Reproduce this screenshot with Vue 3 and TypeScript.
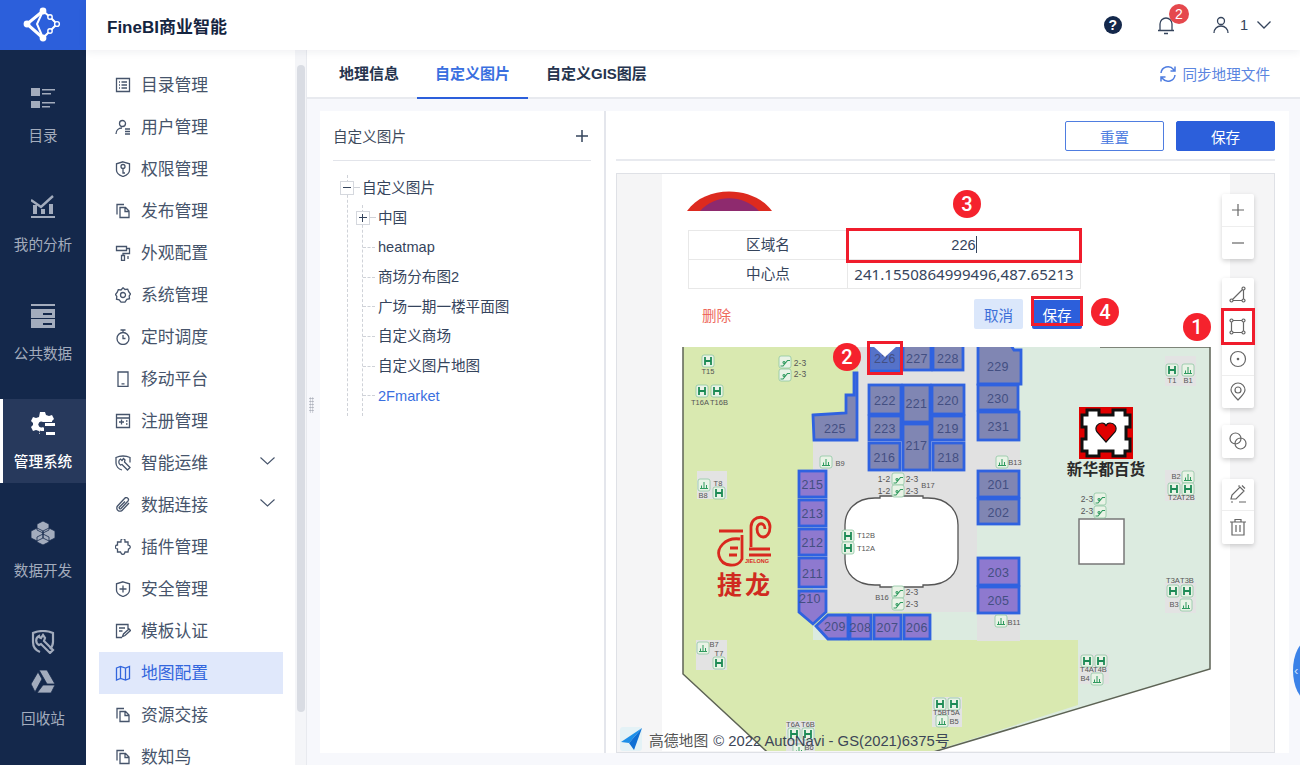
<template>
  <div class="app">
    <aside class="rail">
      <div class="logo">
        <svg width="40" height="40" viewBox="22 5 40 40" fill="none" stroke="#fff">
          <path d="M42 11L26 24L42 38" stroke-width="3" />
          <path d="M42 11L49 17L56 24L49 31L42 38M42 11L36 24L42 38" stroke-width="2" />
          <circle cx="42" cy="11" r="3.4" fill="#fff" stroke="none" />
          <circle cx="26" cy="24" r="3.4" fill="#fff" stroke="none" />
          <circle cx="42" cy="38" r="3.4" fill="#fff" stroke="none" />
          <circle cx="49" cy="17" r="2.2" fill="#2c5fdb" stroke-width="1.4" />
          <circle cx="56" cy="24" r="2.4" fill="#2c5fdb" stroke-width="1.4" />
          <circle cx="49" cy="31" r="2.2" fill="#2c5fdb" stroke-width="1.4" />
        </svg>
      </div>
      <div class="rail-list">
        <div class="rail-item">
          <svg class="rail-icon" viewBox="0 0 24 24" fill="#a3acbd">
            <path d="M0 2h9v8H0zM0 15h9v7H0zM11 3h13v1.600H11zM11 7h9v1.600h-9zM11 16h13v1.600H11zM11 20h8v1.600h-8z" />
          </svg>
          <span>目录</span>
        </div>
        <div class="rail-item">
          <svg class="rail-icon" viewBox="0 0 24 24" fill="#a3acbd">
            <path d="M2 10h4v9H2zM10 14h4v5h-4zM18 9h4v10h-4zM0 21h24v2H0z" />
            <path d="M0 5l10 7L22 1" fill="none" stroke="#a3acbd" stroke-width="2.4" />
          </svg>
          <span>我的分析</span>
        </div>
        <div class="rail-item">
          <svg class="rail-icon" viewBox="0 0 24 24" fill="#a3acbd">
            <path fill-rule="evenodd" d="M0 0h24v2H0zM0 5h24v9H0zM12 9v2h9V9zM0 15h24v9H0zM12 19v2h9v-2z" />
          </svg>
          <span>公共数据</span>
        </div>
        <div class="rail-item active">
          <svg class="rail-icon" viewBox="0 0 24 24" fill="#fff">
            <path fill-rule="evenodd" d="M9 0h5l1 3 3 1 3-1 2 4-2 2v1h-9a3 3 0 1 0 0 5l1 1v3h-3l-1-.500-1 3.500H9l-1-3-3-1-3 1-2-4 2-2v-2L0 9l2-4 3 1 3-1z" />
            <path d="M14 11h10v3H14zM15 20h9v3h-9z" />
          </svg>
          <span>管理系统</span>
        </div>
        <div class="rail-item">
          <svg class="rail-icon" viewBox="0 0 24 24" fill="#a3acbd" stroke="#14284b" stroke-width=".8">
            <path d="M12 0l6 3v6l-6 3-6-3V3zM6 7l6 3v7l-6 3-6-3v-7zM18 7l6 3v7l-6 3-6-3v-7zM12 13l6 3v5l-6 3-6-3v-5z" />
          </svg>
          <span>数据开发</span>
        </div>
        <div class="rail-item short">
          <svg class="rail-icon" viewBox="0 0 24 24" fill="none" stroke="#a3acbd" stroke-width="2.200">
            <path d="M12 1c6 0 10 2 10 2v9c0 3-1 5-3 7M9 22C4 20 2 16 2 12V3s4-2 10-2" />
            <path d="M8 6a5 5 0 0 0 0 9l2-1 9 9 3-3-9-9 1-3-2-3-2 3-2-1z" />
          </svg>
        </div>
        <div class="rail-item">
          <svg class="rail-icon" viewBox="0 0 24 24" fill="#a3acbd" stroke="#14284b" stroke-width=".8">
            <path d="M8 1h8l8 14h-8zM7 3l4 7-7 13-4-8zM12 16h12l-4 8H6z" />
          </svg>
          <span>回收站</span>
        </div>
      </div>
    </aside>

    <div class="main">
      <header class="top">
        <div class="brand">FineBI商业智能</div>
        <div class="top-right">
          <div class="help">?</div>
          <div class="bell">
            <svg width="20" height="20" viewBox="0 0 20 20" fill="none" stroke="#35445c" stroke-width="1.300">
              <path d="M2 15.500h16M4 15.500V9a6 6 0 0 1 12 0v6.500M8 18.500h4" />
            </svg>
            <span class="bell-count">2</span>
          </div>
          <svg class="user" width="18" height="18" viewBox="0 0 18 18" fill="none" stroke="#35445c" stroke-width="1.300">
            <circle cx="9" cy="5" r="3.500" />
            <path d="M2 17c0-4 3-7 7-7s7 3 7 7" />
          </svg>
          <span class="user-name">1</span>
          <svg width="14" height="8" viewBox="0 0 14 8" fill="none" stroke="#35445c" stroke-width="1.300">
            <path d="M.500 .500L7 7l6.500-6.500" />
          </svg>
        </div>
      </header>

      <div class="below">
        <nav class="subnav">
          <ul class="sub-list">
            <li v-for="item in navItems" :key="item.label" class="sub-item" :class="{ current: item.current }">
              <svg width="16" height="16" viewBox="0 0 16 16" fill="none" stroke="currentColor" stroke-width="1.300">
                <path :d="item.icon" />
              </svg>
              <span>{{ item.label }}</span>
              <svg v-if="item.more" class="more" width="15" height="8" viewBox="0 0 15 8" fill="none" stroke="#46546b" stroke-width="1.100">
                <path d="M.500 .500L7.500 7l7-6.500" />
              </svg>
            </li>
          </ul>
          <div class="scroll-track"><div class="scroll-thumb"></div></div>
        </nav>

        <section class="content">
          <div class="tabs">
            <div class="tab">地理信息</div>
            <div class="tab selected">自定义图片</div>
            <div class="tab">自定义GIS图层</div>
            <div class="sync">
              <svg width="18" height="18" viewBox="0 0 18 18" fill="none" stroke="#4f7de0" stroke-width="1.500">
                <path d="M2 8a7 7 0 0 1 12.500-3.500L16 6M16 1.500V6h-4.500M16 10a7 7 0 0 1-12.500 3.500L2 12M2 16.500V12h4.500" />
              </svg>
              <span>同步地理文件</span>
            </div>
          </div>

          <div class="body">
            <div class="grip"></div>
            <div class="tree-panel">
              <div class="tree-head">
                <span>自定义图片</span>
                <svg width="14" height="14" viewBox="0 0 14 14" stroke="#35445c" stroke-width="1.500">
                  <path d="M7 1v12M1 7h12" />
                </svg>
              </div>
              <div class="tree">
                <div class="tree-row root">
                  <i class="node-box minus"></i><i class="dash short-dash"></i><span>自定义图片</span>
                </div>
                <div class="tree-row branch">
                  <i class="node-box plus"></i><i class="dash short-dash"></i><span>中国</span>
                </div>
                <div v-for="leaf in treeLeaves" :key="leaf" class="tree-row leaf" :class="{ on: leaf === '2Fmarket' }">
                  <i class="dash"></i><span>{{ leaf }}</span>
                </div>
              </div>
            </div>

            <div class="map-panel">
              <div class="map-actions">
                <button class="btn-plain">重置</button>
                <button class="btn-save">保存</button>
              </div>
              <div class="map-wrap">
                <svg class="floor" width="658" height="577" viewBox="617 175 658 577">
                  <rect x="662" y="175" width="568" height="577" fill="#fff" />
                  <polygon points="683,348 1210,348 1210,670 900,763 778,763 683,675" fill="#dcebe0" />
                  <polygon points="683,348 858,348 858,442 813,442 813,641 1078,641 1078,706 900,763 778,763 683,675" fill="#d9e9b0" />
                  <polygon points="813,442 858,442 858,348 977,348 977,613 813,613" fill="#e1e1e1" />
                  <rect x="977" y="441" width="43" height="31" fill="#e1e1e1" />
                  <rect x="977" y="613" width="43" height="29" fill="#e1e1e1" />
                  <polygon points="827,613 931,613 931,641 827,641 813,625" fill="#d9e9b0" />
                  <path d="M683 348V675L778 763M1100 348H1210V670L900 763" fill="none" stroke="#5d6355" stroke-width="1.500" />

                  <path d="M875 499H880V497H923V499H928C948 499 958 512 958 526V560C958 574 948 586 928 586H923V588H880V586H875C855 586 845 574 845 560V526C845 512 855 499 875 499Z" fill="#fff" stroke="#555" stroke-width="1.300" />
                  <rect x="1079" y="520" width="45" height="45" fill="#fff" stroke="#777" stroke-width="1.500" />

                  <g v-for="r in rooms" :key="r.id">
                    <polygon v-if="r.points" :points="r.points" :fill="r.fill" stroke="#2f62e0" stroke-width="2.800" />
                    <rect v-else :x="r.x + 1" :y="r.y + 1" :width="r.w - 2" :height="r.h - 2" :fill="r.fill" stroke="#2f62e0" stroke-width="2.800" />
                    <text :x="r.tx" :y="r.ty" class="room-no">{{ r.id }}</text>
                  </g>
                  <polygon points="873,347 897,347 885,358" fill="#fff" />

                  <rect v-for="g in greyBoxes" :key="g.join()" :x="g[0]" :y="g[1]" :width="g[2]" :height="g[3]" fill="#e3e3e3" />
                  <g v-for="m in marks" :key="m.x + '-' + m.y">
                    <rect :x="m.x" :y="m.y" width="12" height="12" rx="2" fill="#e9f3e6" stroke="#8ec6a2" stroke-width=".8" />
                    <path v-if="m.kind === 'lift'" :transform="`translate(${m.x} ${m.y})`" d="M3 2v8M9 2v8M3 6h6" fill="none" stroke="#1c8a55" stroke-width="1.800" />
                    <path v-else-if="m.kind === 'esc'" :transform="`translate(${m.x} ${m.y})`" d="M1.500 10h2.500L8.500 4.500h2.500M5 5.500a1 1 0 1 0 .01 0" fill="none" stroke="#2f9a5f" stroke-width="1.100" />
                    <path v-else :transform="`translate(${m.x} ${m.y})`" d="M2 9.500h8M3.500 9.500V6.500M6 9.500V3M8.500 9.500V6" fill="none" stroke="#2f9a5f" stroke-width="1" />
                  </g>
                  <text v-for="t in mapLabels" :key="t[0] + t[1] + t[2]" :x="t[1]" :y="t[2]" class="map-label" :class="{ level: t[0].includes('-') }">{{ t[0] }}</text>

                  <g fill="none" stroke="#d9281e" stroke-width="2.800">
                    <path d="M719 532H743M740 540C724 538 717 550 719 557C722 568 738 569 742 560V536M730 549H738M729 556H737" />
                    <path d="M751 548V528C751 515 770 515 770 528C770 541 757 541 757 530C757 523 765 523 765 530M749 550H770M749 556H771" />
                  </g>
                  <text x="757" y="564" class="jl-small">JIELONG</text>
                  <text x="745" y="595" class="jl-name">捷龙</text>

                  <rect x="1079" y="408" width="54" height="52" fill="#e00000" />
                  <polygon points="1087,411 1099,411 1099,416 1113,416 1113,411 1125,411 1125,416 1130,416 1130,428 1126,428 1126,440 1130,440 1130,452 1125,452 1125,457 1113,457 1113,452 1099,452 1099,457 1087,457 1087,452 1082,452 1082,440 1086,440 1086,428 1082,428 1082,416 1087,416" fill="#fff" stroke="#111" stroke-width="3" />
                  <path d="M1106 443L1097 433C1094 428 1098 424 1102 424C1104 424 1105.500 425 1106 427C1106.500 425 1108 424 1110 424C1114 424 1118 428 1115 433Z" fill="#e00000" stroke="#111" stroke-width="1.200" />
                  <text x="1106" y="476" class="xhd">新华都百货</text>
                </svg>

                <div class="map-credit">
                  <svg width="24" height="24" viewBox="0 0 24 24">
                    <rect x="0" y="0" width="22" height="24" rx="3" fill="#e4f2f6" />
                    <path d="M22 1L1 15l8 1z" fill="#1c8fe8" />
                    <path d="M22 1L9 16l5 7z" fill="#0f6fd4" />
                  </svg>
                  <span class="credit-name">高德地图</span>
                  <span>© 2022 AutoNavi - GS(2021)6375号</span>
                </div>

                <div class="popup">
                  <svg class="dome" width="85" height="20" viewBox="0 0 85 20">
                    <path d="M0 20C18 -6 66 -6 85 20Z" fill="#dd2a1f" />
                    <path d="M13 20C28 3 56 3 72 20Z" fill="#8e2a6e" />
                  </svg>
                  <table class="info">
                    <tbody>
                      <tr>
                        <th>区域名</th>
                        <td class="value">226<i class="caret"></i></td>
                      </tr>
                      <tr>
                        <th>中心点</th>
                        <td class="value coords">241.1550864999496,487.65213</td>
                      </tr>
                    </tbody>
                  </table>
                  <div class="popup-actions">
                    <span class="remove">删除</span>
                    <button class="btn-soft">取消</button>
                    <button class="btn-small">保存</button>
                  </div>
                </div>

                <div class="tools">
                  <div v-for="(group, i) in toolGroups" :key="i" class="tool-group">
                    <div v-for="tool in group" :key="tool" class="tool">
                      <svg width="20" height="20" viewBox="0 0 20 20" fill="none" stroke="#666" stroke-width="1.200">
                        <path :d="tool" />
                      </svg>
                    </div>
                  </div>
                </div>

                <div class="red-box box-input"></div>
                <div class="red-box box-save"></div>
                <div class="red-box box-room"></div>
                <div class="red-box box-tool"></div>
                <div class="step step-1">1</div>
                <div class="step step-2">2</div>
                <div class="step step-3">3</div>
                <div class="step step-4">4</div>
              </div>
            </div>
          </div>
        </section>
      </div>
    </div>

    <div class="edge-tab">‹</div>
  </div>
</template>

<script setup lang="ts">
interface NavItem {
  label: string;
  icon: string;
  more?: boolean;
  current?: boolean;
}

interface Room {
  id: string;
  x?: number;
  y?: number;
  w?: number;
  h?: number;
  points?: string;
  fill: string;
  tx: number;
  ty: number;
}

const pageIcon = 'M5 4.500h5.500l3.500 3.500v6.500H5zM10 5v3.500h4M2 11.500V1.500h7';

const navItems: NavItem[] = [
  { label: '目录管理', icon: 'M1.500 1.500h13v13h-13zM4 5h1M6.500 5h5.500M4 8h1M6.500 8h5.500M4 11h1M6.500 11h5.500' },
  { label: '用户管理', icon: 'M4.500 4.500a3 3 0 1 0 6 0a3 3 0 1 0-6 0M1 15c0-3.500 2.500-6 6-6M10 10h5M10 12.500h5M10 15h5' },
  { label: '权限管理', icon: 'M8 .800l6.500 2v6.500c0 3-3 5-6.500 6.200C4.500 14.300 1.500 12.300 1.500 9.300V2.800zM6 5.500a2 2 0 1 0 4 0a2 2 0 1 0-4 0M8 7.500v4.500h2' },
  { label: '发布管理', icon: pageIcon },
  { label: '外观配置', icon: 'M1.500 1.500h10v4h-10zM11.500 3.500h3v5H8v2M6.500 10.500h3v5h-3zM13 11v3' },
  { label: '系统管理', icon: 'M8 .800l2 1.700 2.700-.300 1 2.500 1.800 2.300-1.300 2 .300 2.700-2.700.700L10 15.200H6l-1.800-2.300-2.700-.700.300-2.700-1.300-2 1.800-2.300 1-2.500 2.700.300zM5.500 8a2.500 2.500 0 1 0 5 0a2.500 2.500 0 1 0-5 0' },
  { label: '定时调度', icon: 'M2 9.500a6 6 0 1 0 12 0a6 6 0 1 0-12 0M5.500 1h5M8 1v2.500M8 6v3.500h2.500' },
  { label: '移动平台', icon: 'M3 1h10v14.500H3zM6.500 12.800h3' },
  { label: '注册管理', icon: 'M1.500 1.500h13v13h-13zM1.500 5h13M4 9h5M6.500 6.500v5M11 8h1.500M11 11h1.500' },
  { label: '智能运维', more: true, icon: 'M8 1c4 0 7 1.500 7 1.500v5M7 15C3.500 14 1 11 1 8V2.500S4 1 8 1M5.500 4a3.500 3.500 0 0 0 0 6l1.500-.500 5.500 5.500 2.500-2.500-5.500-5.500.500-2-1.500-1.500-1.500 2z' },
  { label: '数据连接', more: true, icon: 'M14 6L7.500 13a3 3 0 0 1-5-4l7-7.500a2 2 0 0 1 3.500 2.500l-7 7.500a1 1 0 0 1-1.500-1.500L10 4.500' },
  { label: '插件管理', icon: 'M6 1.500a2 2 0 0 1 4 0L10 3h3v3l1.500.500a2 2 0 0 1-1 3.500L13 13h-3l-.500 1.500a2 2 0 0 1-3.500-.500L5.500 13H2.500V10L1 9.500a2 2 0 0 1 1.500-3.500V3H6z' },
  { label: '安全管理', icon: 'M8 .800l6.500 2v6.500c0 3-3 5-6.500 6.200C4.500 14.300 1.500 12.300 1.500 9.300V2.800zM4.500 8h7M8 4.500v7' },
  { label: '模板认证', icon: 'M13 6V1.500H1.500v13H7M4 5h6M4 8h3.500M7.500 13.500l1-2.500 5.500-5 1.500 1.500-5.500 5z' },
  { label: '地图配置', current: true, icon: 'M1.500 3l4-1.500 5 1.500 4-1.500v12l-4 1.500-5-1.500-4 1.500zM5.500 1.500v12M10.500 3v12' },
  { label: '资源交接', icon: pageIcon },
  { label: '数知鸟', icon: pageIcon }
];

const treeLeaves = ['heatmap', '商场分布图2', '广场一期一楼平面图', '自定义商场', '自定义图片地图', '2Fmarket'];

const dark = '#8086b3';
const purple = '#8e79cf';

function box(id: string, x: number, y: number, w: number, h: number, fill = dark): Room {
  return { id, x, y, w, h, fill, tx: x + w / 2, ty: y + h / 2 + 5 };
}

const rooms: Room[] = [
  box('226', 868, 345, 34, 28, '#5572c9'),
  box('227', 902, 345, 30, 27),
  box('228', 932, 345, 32, 27),
  { id: '229', points: '978,345 1010,345 1014,351 1021,351 1021,385 978,385', fill: dark, tx: 998, ty: 372 },
  box('230', 977, 385, 42, 27),
  box('231', 977, 412, 43, 30),
  box('222', 868, 385, 34, 31),
  { ...box('221', 902, 385, 29, 39), ty: 409 },
  box('220', 931, 385, 34, 31),
  box('223', 868, 416, 34, 26),
  box('219', 931, 416, 34, 26),
  { ...box('217', 902, 424, 29, 48), ty: 451 },
  box('216', 868, 443, 33, 29),
  box('218', 932, 443, 33, 29),
  { id: '225', points: '813,416 846,414 846,396 854,396 854,374 857,374 857,441 814,441', fill: dark, tx: 835, ty: 434 },
  box('215', 798, 471, 29, 28, purple),
  box('213', 798, 500, 29, 28, purple),
  box('212', 798, 529, 29, 28, purple),
  box('211', 798, 558, 29, 31, purple),
  { id: '210', points: '799,592 826,592 826,613 813,625 799,613', fill: purple, tx: 810, ty: 604 },
  { id: '209', points: '828,616 848,616 848,640 828,640 816,627', fill: purple, tx: 835, ty: 632 },
  box('208', 849, 615, 23, 26, purple),
  box('207', 873, 615, 29, 26, purple),
  box('206', 903, 615, 28, 26, purple),
  box('201', 977, 471, 43, 28),
  box('202', 977, 499, 43, 27),
  box('203', 977, 558, 43, 29, purple),
  box('205', 977, 587, 43, 28, purple)
];

// x, y, w, h of the grey plates behind lifts and stairs
const greyBoxes = [
  [697, 472, 30, 28],
  [1165, 357, 31, 30],
  [1165, 471, 30, 31],
  [1165, 583, 31, 31],
  [696, 641, 31, 30],
  [1079, 655, 30, 30],
  [932, 698, 30, 30],
  [786, 722, 29, 30]
];

const marks = [
  { x: 702, y: 356, kind: 'lift' }, { x: 779, y: 357, kind: 'esc' }, { x: 779, y: 370, kind: 'esc' },
  { x: 696, y: 386, kind: 'lift' }, { x: 711, y: 386, kind: 'lift' }, { x: 820, y: 457, kind: 'stair' },
  { x: 698, y: 480, kind: 'stair' }, { x: 713, y: 488, kind: 'lift' }, { x: 892, y: 474, kind: 'esc' },
  { x: 892, y: 486, kind: 'esc' }, { x: 842, y: 531, kind: 'lift' }, { x: 842, y: 543, kind: 'lift' },
  { x: 892, y: 587, kind: 'esc' }, { x: 892, y: 599, kind: 'esc' }, { x: 1166, y: 365, kind: 'lift' },
  { x: 1182, y: 365, kind: 'stair' }, { x: 996, y: 457, kind: 'stair' }, { x: 1182, y: 472, kind: 'stair' },
  { x: 1168, y: 484, kind: 'lift' }, { x: 1182, y: 484, kind: 'lift' }, { x: 1094, y: 494, kind: 'esc' },
  { x: 1094, y: 507, kind: 'esc' }, { x: 1167, y: 586, kind: 'lift' }, { x: 1181, y: 586, kind: 'lift' },
  { x: 1180, y: 600, kind: 'stair' }, { x: 995, y: 616, kind: 'stair' }, { x: 697, y: 643, kind: 'stair' },
  { x: 713, y: 658, kind: 'lift' }, { x: 1081, y: 656, kind: 'lift' }, { x: 1095, y: 656, kind: 'lift' },
  { x: 1091, y: 674, kind: 'stair' }, { x: 934, y: 699, kind: 'lift' }, { x: 948, y: 699, kind: 'lift' },
  { x: 936, y: 716, kind: 'stair' }, { x: 788, y: 729, kind: 'lift' }, { x: 802, y: 729, kind: 'lift' },
  { x: 793, y: 745, kind: 'stair' }
];

const mapLabels: [string, number, number][] = [
  ['T15', 708, 375], ['2-3', 800, 367], ['2-3', 800, 378], ['T16A', 700, 406], ['T16B', 719, 406],
  ['B9', 840, 467], ['B8', 703, 499], ['T8', 718, 487], ['1-2', 884, 483], ['2-3', 912, 483],
  ['1-2', 884, 495], ['2-3', 912, 495], ['B17', 928, 489], ['T12B', 866, 539], ['T12A', 866, 552],
  ['2-3', 912, 596], ['2-3', 912, 608], ['B16', 882, 601], ['T1', 1172, 384], ['B1', 1188, 384],
  ['B13', 1015, 466], ['B2', 1176, 480], ['T2A', 1175, 501], ['T2B', 1188, 501], ['2-3', 1087, 503],
  ['2-3', 1087, 515], ['T3A', 1173, 584], ['T3B', 1187, 584], ['B3', 1174, 608], ['B11', 1014, 626],
  ['B7', 714, 648], ['T7', 719, 657], ['T4A', 1087, 673], ['T4B', 1100, 673], ['B4', 1085, 682],
  ['T5B', 940, 716], ['T5A', 953, 716], ['B5', 954, 725], ['T6A', 793, 728], ['T6B', 808, 728], ['B6', 809, 751]
];

const toolGroups: string[][] = [
  ['M4 10h12M10 4v12', 'M4 10h12'],
  [
    'M3.500 15a1.500 1.500 0 1 0 .01 0M15.500 15a1.500 1.500 0 1 0 .01 0M15.500 3a1.500 1.500 0 1 0 .01 0M5 16.500h9M4.500 15.500L14.500 5.500M15.500 6v9',
    'M3.500 3a1.500 1.500 0 1 0 .01 0M15.500 3a1.500 1.500 0 1 0 .01 0M3.500 15a1.500 1.500 0 1 0 .01 0M15.500 15a1.500 1.500 0 1 0 .01 0M5 4.500h9M5 16.500h9M3.500 6v9M15.500 6v9',
    'M2.500 10a7.500 7.500 0 1 0 15 0a7.500 7.500 0 1 0-15 0M9.300 10a.7.700 0 1 0 1.400 0a.7.700 0 1 0-1.400 0',
    'M10 18c-4-4-7-7-7-10a7 7 0 0 1 14 0c0 3-3 6-7 10zM7 8a3 3 0 1 0 6 0a3 3 0 1 0-6 0'
  ],
  ['M2 7.500a5.500 5.500 0 1 0 11 0a5.500 5.500 0 1 0-11 0M7 12.500a5.500 5.500 0 1 0 11 0a5.500 5.500 0 1 0-11 0'],
  [
    'M3 15l1-4 8-8 4 4-8 8zM10.500 2.500l1-1M14 1.500l3 3M11 18h7M3 18h2',
    'M2 5h16M7 5V2.500h6V5M4 5v13h12V5M8 8v7M12 8v7'
  ]
];
</script>

<style>
html,
body {
  margin: 0;
  overflow: hidden;
}
</style>

<style scoped>
.app {
  position: relative;
  display: flex;
  width: 1300px;
  height: 765px;
  overflow: hidden;
  background: #fff;
  font-family: "Liberation Sans", "Noto Sans CJK SC", sans-serif;
  font-size: 14.6px;
  color: #35445c;
}

.rail {
  flex: 0 0 86px;
  background: #14284b;
}
.logo {
  display: flex;
  align-items: center;
  justify-content: center;
  height: 50px;
  background: #2c5fdb;
}
.rail-list { padding-top: 23px; }
.rail-item {
  display: flex;
  flex-direction: column;
  align-items: center;
  height: 84px;
  margin-bottom: 24.75px;
  padding-top: 13px;
  box-sizing: border-box;
  font-size: 14.6px;
  color: #a3acbd;
}
.rail-item span {
  margin-top: 16px;
  line-height: 20px;
}
.rail-icon {
  width: 24px;
  height: 24px;
  flex: none;
}
.rail-item.active {
  background: #27395c;
  border-left: 3px solid #fff;
  color: #fff;
  font-weight: 500;
}
.rail-item.active .rail-icon,
.rail-item.active span { margin-left: -3px; }
.rail-item.short {
  height: 39px;
  margin-bottom: 0;
}

.main {
  flex: 1;
  min-width: 0;
  display: flex;
  flex-direction: column;
}
.top {
  position: relative;
  z-index: 2;
  flex: 0 0 50px;
  display: flex;
  align-items: center;
  justify-content: space-between;
  padding: 0 29px 0 21px;
  background: #fff;
  box-shadow: 0 2px 8px rgba(30, 40, 70, 0.07);
}
.brand {
  font-size: 17px;
  font-weight: 700;
  color: #14243f;
}
.top-right {
  display: flex;
  align-items: center;
}
.help {
  width: 18px;
  height: 18px;
  border-radius: 50%;
  background: #14284b;
  color: #fff;
  font-size: 14px;
  font-weight: 700;
  line-height: 18px;
  text-align: center;
}
.bell {
  position: relative;
  width: 20px;
  height: 20px;
  margin-left: 34px;
}
.bell-count {
  position: absolute;
  left: 13px;
  top: -11px;
  width: 20px;
  height: 20px;
  border-radius: 50%;
  background: #e5484d;
  color: #fff;
  font-size: 14px;
  line-height: 20px;
  text-align: center;
}
.user { margin-left: 36px; }
.user-name {
  margin: 0 9px 0 10px;
  font-size: 14.6px;
}

.below {
  flex: 1;
  min-height: 0;
  display: flex;
}
.subnav {
  flex: 0 0 221px;
  display: flex;
  border-right: 1px solid #e8eaef;
  box-sizing: border-box;
}
.sub-list {
  flex: 1;
  margin: 0;
  padding: 14px 12px 0 13px;
  list-style: none;
}
.sub-item {
  display: flex;
  align-items: center;
  gap: 10px;
  height: 42px;
  padding-left: 16px;
  font-size: 16.8px;
  color: #46546b;
}
.sub-item span { margin-top: -2px; }
.sub-item .more {
  margin-left: auto;
  margin-right: 8px;
  margin-top: -4px;
}
.sub-item.current {
  background: #e0e8fb;
  color: #3366dd;
}
.scroll-track {
  flex: 0 0 11px;
  padding: 15px 1.500px 0 1.500px;
  box-sizing: border-box;
  background: #f4f5f8;
}
.scroll-thumb {
  height: 647px;
  border-radius: 4px;
  background: #d9dce3;
}

.content {
  flex: 1;
  min-width: 0;
  display: flex;
  flex-direction: column;
}
.tabs {
  flex: 0 0 49px;
  display: flex;
  align-items: stretch;
  padding-right: 30px;
  box-sizing: border-box;
  border-bottom: 2px solid #e8eaef;
}
.tab {
  padding: 0 18px;
  margin-bottom: -2px;
  font-size: 15px;
  line-height: 48px;
  font-weight: 700;
  color: #26344e;
}
.tab:first-child { padding-left: 19px; margin-left: 13px; }
.tab.selected {
  color: #3a6fe0;
  border-bottom: 2px solid #2c5fdb;
  box-sizing: border-box;
  height: 49px;
}
.sync {
  margin-left: auto;
  display: flex;
  align-items: center;
  gap: 5px;
  color: #5b85e0;
}

.body {
  position: relative;
  flex: 1;
  min-height: 0;
  display: flex;
  padding: 12px 11px 12px 13px;
  background: #f7f8fc;
}
.grip {
  position: absolute;
  left: 2px;
  top: 298px;
  width: 5px;
  height: 16px;
  background-image: radial-gradient(#a9aeb8 0.8px, transparent 0.9px);
  background-size: 2.500px 3px;
}
.tree-panel {
  flex: 0 0 286px;
  padding: 0 13px;
  box-sizing: border-box;
  background: #fff;
  border-right: 2px solid #e4e6ec;
}
.tree-head {
  display: flex;
  align-items: center;
  justify-content: space-between;
  height: 50px;
  padding-right: 2px;
  border-bottom: 1px solid #e2e4ea;
  box-sizing: border-box;
}
.tree-head span { color: #3e4a5c; }
.tree {
  position: relative;
  margin-top: 12px;
}
.tree::before,
.tree::after {
  content: "";
  position: absolute;
  bottom: -5px;
  border-left: 1px dashed #cfd2d8;
}
.tree::before { left: 14px; top: 2px; }
.tree::after { left: 29px; top: 32px; }
.tree-row {
  position: relative;
  z-index: 1;
  display: flex;
  align-items: center;
  height: 29.720px;
  line-height: 20px;
}
.root { padding-left: 7px; }
.branch { padding-left: 23px; }
.leaf { padding-left: 30px; }
.leaf.on { color: #3a6fe0; }
.node-box {
  position: relative;
  flex: none;
  width: 12px;
  height: 12px;
  border: 1px solid #d5d8de;
  background: #fff;
}
.node-box::before {
  content: "";
  position: absolute;
  left: 2px;
  right: 2px;
  top: 5px;
  height: 1px;
  background: #35445c;
}
.node-box.plus::after {
  content: "";
  position: absolute;
  top: 2px;
  bottom: 2px;
  left: 5px;
  width: 1px;
  background: #35445c;
}
.dash {
  flex: none;
  width: 12px;
  margin-right: 3px;
  border-top: 1px dashed #cfd2d8;
}
.short-dash {
  width: 6px;
  margin-right: 2px;
}

.map-panel {
  flex: 1;
  min-width: 0;
  display: flex;
  flex-direction: column;
  padding: 0 14px 0 10px;
  background: #fff;
}
.map-actions {
  flex: 0 0 50px;
  display: flex;
  justify-content: flex-end;
  gap: 12px;
  padding-top: 10px;
  box-sizing: border-box;
  border-bottom: 2px solid #e8eaef;
}
.map-actions button,
.popup-actions button {
  font: inherit;
  cursor: pointer;
}
.btn-plain,
.btn-save {
  width: 99px;
  height: 30px;
  padding: 0;
  border-radius: 2px;
}
.btn-plain {
  background: #fff;
  border: 1px solid #4f7de0;
  color: #4f7de0;
}
.btn-save {
  background: #2c5fdb;
  border: 1px solid #2c5fdb;
  color: #fff;
}
.map-wrap {
  position: relative;
  flex: 1;
  min-height: 0;
  margin-top: 12px;
  border: 1px solid #dfe1e6;
  background: #f5f5f6;
  overflow: hidden;
}
.floor { display: block; }
.room-no {
  font-size: 12.500px;
  letter-spacing: .3px;
  fill: #434f82;
  text-anchor: middle;
}
.map-label {
  font-size: 7.500px;
  fill: #555;
  text-anchor: middle;
}
.map-label.level { font-size: 8.500px; }
.jl-small {
  font-size: 5.500px;
  font-weight: 700;
  fill: #d9281e;
  text-anchor: middle;
}
.jl-name {
  font-size: 25px;
  font-weight: 700;
  letter-spacing: 3px;
  fill: #d02a20;
  text-anchor: middle;
}
.xhd {
  font-size: 15.700px;
  font-weight: 700;
  fill: #2a2a2a;
  text-anchor: middle;
}
.map-credit {
  position: absolute;
  left: 3px;
  bottom: 1px;
  display: flex;
  align-items: center;
  gap: 5px;
  color: #3c4657;
  font-size: 14.800px;
}
.credit-name { color: #555; }

.popup {
  position: absolute;
  left: 45px;
  top: 0;
  width: 568px;
  height: 173px;
  padding: 17px 0 0 26px;
  box-sizing: border-box;
  background: #fff;
}
.dome {
  display: block;
  margin-left: -1px;
}
.info {
  width: 393px;
  margin-top: 19px;
  table-layout: fixed;
  border-collapse: collapse;
}
.info th,
.info td {
  height: 28px;
  border: 1px solid #e8e8e8;
  padding: 0;
  font-weight: 400;
  line-height: 20px;
  text-align: center;
}
.info th { width: 158px; }
.value { position: relative; }
.coords {
  font-family: "Noto Sans", "Noto Sans CJK SC", sans-serif;
  font-size: 15.100px;
}
.caret {
  display: inline-block;
  width: 1px;
  height: 17px;
  vertical-align: -3px;
  background: #35445c;
}
.popup-actions {
  display: flex;
  align-items: center;
  width: 394px;
  margin-top: 10px;
}
.remove {
  margin-left: 14px;
  margin-right: auto;
  margin-top: 1px;
  color: #ee6a5e;
}
.btn-soft {
  width: 49px;
  height: 30px;
  padding: 0;
  border: 0;
  border-radius: 2px;
  background: #dbe7fb;
  color: #3d6fd8;
}
.btn-small {
  width: 50px;
  height: 29px;
  margin-left: 9px;
  padding: 0;
  border: 0;
  border-radius: 2px;
  background: #2c5fdb;
  color: #fff;
}

.tools {
  position: absolute;
  left: 605px;
  top: 20px;
  width: 32px;
}
.tool-group {
  background: #fff;
  border-radius: 2px;
  box-shadow: 0 2px 5px rgba(0, 0, 0, 0.18);
}
.tool-group:nth-child(2) { margin-top: 19px; }
.tool-group:nth-child(3) { margin-top: 17px; }
.tool-group:nth-child(4) { margin-top: 21px; }
.tool {
  display: flex;
  align-items: center;
  justify-content: center;
  height: 32.500px;
  border-bottom: 1px solid #eee;
  box-sizing: border-box;
}
.tool:last-child { border-bottom: 0; }

.red-box {
  position: absolute;
  border: 3px solid #f01c2c;
  box-sizing: border-box;
}
.box-input { left: 229px; top: 54px; width: 236px; height: 35px; }
.box-save { left: 414px; top: 122px; width: 52px; height: 30px; }
.box-room { left: 250px; top: 167px; width: 36px; height: 34px; }
.box-tool { left: 604px; top: 134px; width: 34px; height: 37px; }

.step {
  position: absolute;
  width: 28px;
  height: 28px;
  border-radius: 50%;
  background: #f5222d;
  color: #fff;
  font-family: Roboto, "Liberation Sans", sans-serif;
  font-size: 20px;
  font-weight: 500;
  line-height: 28px;
  text-align: center;
}
.step-1 { left: 566px; top: 139px; }
.step-2 { left: 216px; top: 169px; }
.step-3 { left: 336px; top: 16px; }
.step-4 { left: 474px; top: 124px; }

.edge-tab {
  position: absolute;
  right: -23px;
  top: 641px;
  width: 30px;
  height: 59px;
  border-radius: 50%;
  background: #3b82e8;
  color: #cfe0fa;
  font-size: 13px;
  line-height: 59px;
  text-indent: 1px;
}
</style>
